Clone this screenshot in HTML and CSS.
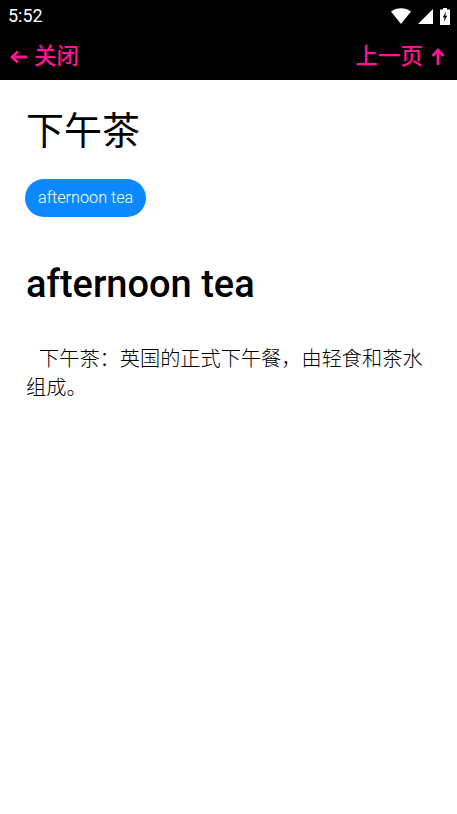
FILE: index.html
```html
<!DOCTYPE html>
<html lang="zh">
<head>
    <meta charset="UTF-8">
    <meta name="viewport" content="width=device-width, initial-scale=1.0">
    <title>下午茶</title>
    <link rel="stylesheet" href="styles.css">
</head>
<body>
    <div class="status-bar">
        <span class="time">5:52</span>
        <div class="status-icons">
            <svg class="wifi" width="20" height="16" viewBox="0 0 20 16"><path d="M0 3.5C5.5-1 14.500-1 20 3.500L10 16Z" fill="#fff"/></svg>
            <svg class="signal" width="15" height="15" viewBox="0 0 15 15"><path d="M0 15 15 0V15Z" fill="#fff"/></svg>
            <svg class="battery" width="10" height="17" viewBox="0 0 10 17"><path d="M3 0H7V1.500H10V17H0V1.500H3Z" fill="#fff"/><path d="M6 3.500 2.800 9.500H4.600L3.800 14 7.200 7.800H5.300Z" fill="#000"/></svg>
        </div>
    </div>

    <nav class="nav-bar">
        <a class="nav-link">
            <svg class="arrow-left" width="18" height="14" viewBox="0 0 18 14"><path d="M17 7H3M8 1.500 2 7l6 5.500" fill="none" stroke="#ff1493" stroke-width="2.800"/></svg>
            关闭
        </a>
        <a class="nav-link next">
            上一页
            <svg class="arrow-up" width="14" height="18" viewBox="0 0 14 18"><path d="M7 17V3M1.500 8 7 2l5.500 6" fill="none" stroke="#ff1493" stroke-width="2.800"/></svg>
        </a>
    </nav>

    <main class="content">
        <h1 class="title">下午茶</h1>
        <span class="tag">afternoon tea</span>
        <h2 class="word">afternoon tea</h2>
        <p class="desc">下午茶：英国的正式下午餐，由轻食和茶水组成。</p>
    </main>
</body>
</html>
```

FILE: styles.css
```css
* {
    box-sizing: border-box;
}

body {
    font-family: Roboto, "Noto Sans CJK SC", sans-serif;
    background-color: #fff;
    color: #000;
    margin: 0;
    padding: 0;
}

.status-bar {
    display: flex;
    justify-content: space-between;
    align-items: center;
    height: 32px;
    padding: 0 7px 0 8px;
    background-color: #000;
    color: #fff;
}

.time {
    font-size: 18px;
    font-weight: 400;
    padding-bottom: 2px;
}

.status-icons {
    display: flex;
    align-items: center;
    gap: 7px;
}

.nav-bar {
    display: flex;
    justify-content: space-between;
    align-items: center;
    height: 48px;
    padding: 0 12px 5px 10px;
    background-color: #000;
}

.nav-link {
    display: flex;
    align-items: center;
    gap: 6px;
    color: #ff1493;
    font-size: 22.500px;
    font-weight: 500;
}

.nav-link.next {
    gap: 8px;
}

.arrow-left {
    margin-top: 6px;
}

.arrow-up {
    margin-top: 6px;
}

.content {
    padding: 0 26px;
}

.title {
    margin: 0;
    padding-top: 26px;
    font-size: 38px;
    font-weight: 400;
    line-height: 50px;
}

.tag {
    display: inline-block;
    margin: 23px 0 0 -1px;
    padding: 0 13px;
    height: 38px;
    line-height: 38px;
    border-radius: 19px;
    background-color: #0d89ff;
    color: #fff;
    font-size: 16.200px;
    font-weight: 300;
}

.word {
    margin: 42px 0 0;
    font-size: 38px;
    font-weight: 500;
    line-height: 50px;
}

.desc {
    margin: 36px 0 0;
    font-size: 20.200px;
    font-weight: 300;
    line-height: 29px;
    text-indent: 13px;
}
```
